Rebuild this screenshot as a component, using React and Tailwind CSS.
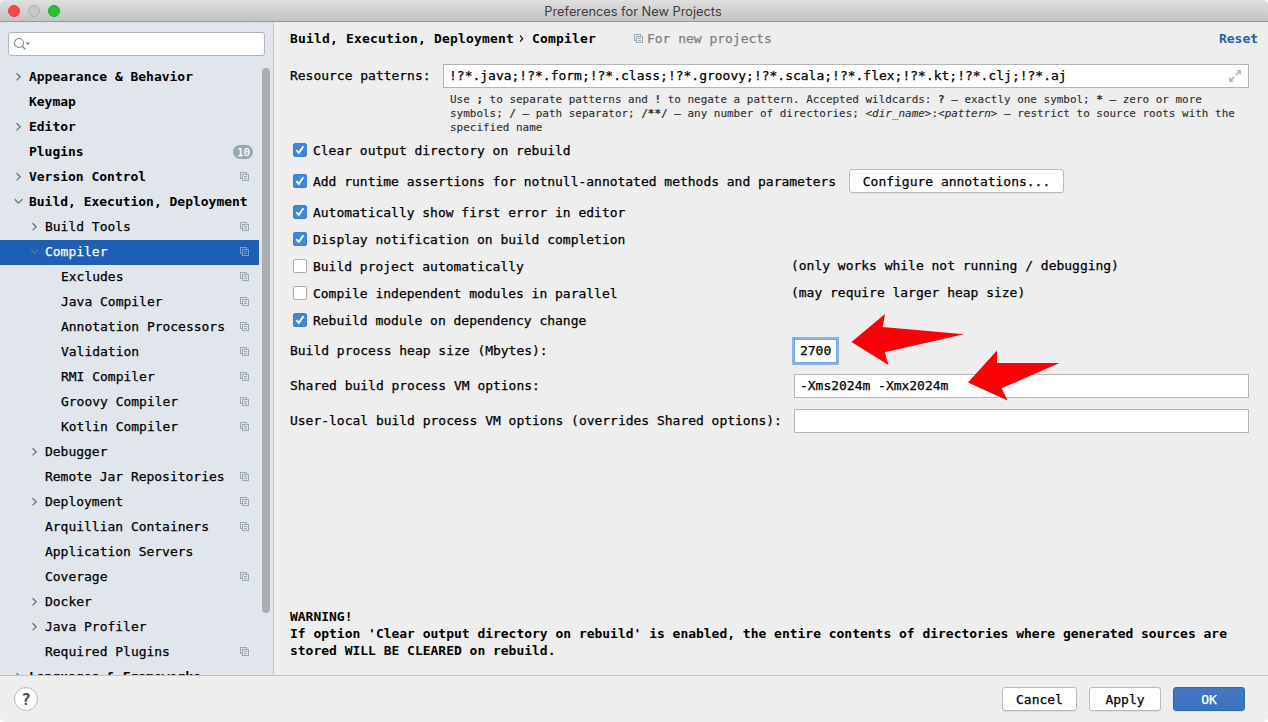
import React from "react";

const CopyIcon = ({ className = "text-[#9aa7b0]" }) => (
  <svg width="9" height="9" viewBox="0 0 9 9" fill="none" stroke="currentColor" shapeRendering="crispEdges" className={"shrink-0 " + className}>
    <path d="M2 6.5H.5V.5H6.5V2" />
    <path d="M2.5 2.5H8.5V8.5H2.5Z" />
    <path d="M4 4.5H7M4 6.5H7" />
  </svg>
);

const Arrow = ({ open, className }) => (
  <svg width="10" height="10" viewBox="0 0 10 10" fill="none" stroke="currentColor" strokeWidth="1.3" className={className}>
    {open ? <path d="M1.6 2.3L5.5 6.2L9.4 2.3" /> : <path d="M3.5 1.2L7.2 4.8L3.5 8.4" />}
  </svg>
);

const items = [
  { t: "Appearance & Behavior", d: 0, a: "closed" },
  { t: "Keymap", d: 0 },
  { t: "Editor", d: 0, a: "closed" },
  { t: "Plugins", d: 0, badge: "10" },
  { t: "Version Control", d: 0, a: "closed", c: true },
  { t: "Build, Execution, Deployment", d: 0, a: "open" },
  { t: "Build Tools", d: 1, a: "closed", c: true },
  { t: "Compiler", d: 1, a: "open", c: true, sel: true },
  { t: "Excludes", d: 2, c: true },
  { t: "Java Compiler", d: 2, c: true },
  { t: "Annotation Processors", d: 2, c: true },
  { t: "Validation", d: 2, c: true },
  { t: "RMI Compiler", d: 2, c: true },
  { t: "Groovy Compiler", d: 2, c: true },
  { t: "Kotlin Compiler", d: 2, c: true },
  { t: "Debugger", d: 1, a: "closed" },
  { t: "Remote Jar Repositories", d: 1, c: true },
  { t: "Deployment", d: 1, a: "closed", c: true },
  { t: "Arquillian Containers", d: 1, c: true },
  { t: "Application Servers", d: 1 },
  { t: "Coverage", d: 1, c: true },
  { t: "Docker", d: 1, a: "closed" },
  { t: "Java Profiler", d: 1, a: "closed" },
  { t: "Required Plugins", d: 1, c: true },
  { t: "Languages & Frameworks", d: 0, a: "closed" },
];

const indents = ["pl-[13px]", "pl-[29px]", "pl-[45px]"];

function TreeRow({ item }) {
  return (
    <div className={`flex h-[25px] w-[259px] shrink-0 items-start ${indents[item.d]} ${item.sel ? "bg-[#1e5fb3] text-white" : ""}`}>
      <div className="w-4 shrink-0 pt-[7px]">
        {item.a && <Arrow open={item.a === "open"} className={item.sel ? "text-[#5f6f84]" : "text-[#6e7277]"} />}
      </div>
      <span className={`flex-1 pt-[3px] ${item.d === 0 ? "font-bold [-webkit-text-stroke:0px]" : ""}`}>{item.t}</span>
      {item.badge && (
        <span className="mt-[5px] mr-[6px] flex h-[14px] w-5 shrink-0 items-center justify-center rounded-full bg-[#9aa7b0] pt-px pl-px text-[11px] text-white">{item.badge}</span>
      )}
      {item.c && <CopyIcon className={item.sel ? "mt-[7px] mr-[10px] text-[#7f9cc4]" : "mt-[7px] mr-[10px] text-[#9aa7b0]"} />}
    </div>
  );
}

function Check({ on, label, gap, children }) {
  return (
    <div className={`flex h-[26px] items-center ${gap}`}>
      <span className={`ml-[3px] flex h-[14px] w-[14px] shrink-0 items-center justify-center rounded-[2px] border ${on ? "border-[#3b80cf] bg-[#3f87da]" : "border-[#acacac] bg-white"}`}>
        {on && (
          <svg width="12" height="12" viewBox="0 0 12 12" fill="none" stroke="white" strokeWidth="1.9">
            <path d="M2.3 6.2L4.8 8.9L9.4 2.2" />
          </svg>
        )}
      </span>
      <span className="w-[479px] pl-[6px] pt-px">{label}</span>
      {children}
    </div>
  );
}

const Button = ({ className, children }) => (
  <button className={`flex h-6 shrink-0 items-center justify-center rounded-[3px] border pt-px shadow-[0_1px_0_rgba(0,0,0,0.06)] ${className}`}>{children}</button>
);

export default function App() {
  return (
    <div className="flex h-[722px] w-[1268px] flex-col overflow-hidden bg-white whitespace-nowrap font-['DejaVu_Sans_Mono',monospace] text-[12.97px] leading-[17px] text-black [-webkit-text-stroke:0.25px]">
      <div className="flex h-[22px] shrink-0 items-center rounded-t-[5px] border-b border-[#979797] bg-linear-to-b from-[#e0e0e0] to-[#c3c3c3]">
        <div className="flex w-[273px] gap-2 pl-2">
          <span className="h-3 w-3 rounded-full border border-[#df3d3a] bg-[#fc4946]" />
          <span className="h-3 w-3 rounded-full border border-[#aeaeae] bg-[#c7c7c7]" />
          <span className="h-3 w-3 rounded-full border border-[#1fa628] bg-[#28c131]" />
        </div>
        <span className="flex-1 pr-[275px] pt-[2px] text-center font-['Inter',sans-serif] text-[12.8px] text-[#3c3c3c] [-webkit-text-stroke:0px]">Preferences for New Projects</span>
      </div>

      <div className="flex h-[653px] shrink-0">
        <div className="flex w-[274px] shrink-0 flex-col overflow-hidden border-r border-[#c3c5c9] bg-[#e1e6ed]">
          <div className="mt-[10px] ml-2 flex h-6 w-[257px] shrink-0 items-center rounded-[3px] border border-[#b5b5b5] bg-white pl-[5px]">
            <svg width="17" height="14" viewBox="0 0 17 14" fill="none" stroke="#7f8b91">
              <circle cx="5" cy="6" r="4.5" strokeWidth="1.1" />
              <path d="M8.2 9.2L11.3 12.2" strokeWidth="1.5" />
              <path d="M11.5 5.5H16.2L13.85 8Z" fill="#7f8b91" stroke="none" />
            </svg>
          </div>
          <div className="mt-[9px] flex min-h-0 flex-1">
            <div className="flex h-full w-[262px] flex-col overflow-hidden">
              {items.map((i) => <TreeRow key={i.t} item={i} />)}
            </div>
            <div className="mt-[3px] h-[545px] w-2 rounded-full bg-[#a9adb2]" />
          </div>
        </div>

        <div className="flex flex-1 flex-col bg-[#eeeeee] pl-4">
          <div className="flex h-[33px] shrink-0 items-center pr-[10px]">
            <span className="font-bold tracking-[0.19px] [-webkit-text-stroke:0px]">Build, Execution, Deployment</span>
            <svg width="18" height="10" viewBox="0 0 18 10" fill="none" stroke="black" strokeWidth="1.2" className="shrink-0"><path d="M6.2 1.5L8.6 4.6L6.2 7.7" /></svg>
            <span className="font-bold tracking-[0.19px] [-webkit-text-stroke:0px]">Compiler</span>
            <CopyIcon className="ml-[38px] text-[#9aa7b0]" />
            <span className="flex-1 pl-1 text-[#808080]">For new projects</span>
            <span className="font-bold text-[#1e5fae] [-webkit-text-stroke:0px]">Reset</span>
          </div>

          <div className="mt-[9px] flex h-6 shrink-0 items-center">
            <span className="w-[153px] pb-px">Resource patterns:</span>
            <div className="flex h-6 w-[806px] items-center justify-between border border-[#b5b5b5] bg-white pr-[7px] pl-[5px]">
              <span className="pb-px tracking-[0.01px]">!?*.java;!?*.form;!?*.class;!?*.groovy;!?*.scala;!?*.flex;!?*.kt;!?*.clj;!?*.aj</span>
              <svg width="12" height="12" viewBox="0 0 12 12" fill="#b4bac0">
                <path d="M7 0H12V5L10.2 3.2L7.7 5.7L6.3 4.3L8.8 1.8ZM0 7L1.8 8.8L4.3 6.3L5.7 7.7L3.2 10.2L5 12H0Z" />
              </svg>
            </div>
          </div>

          <div className="mt-[5px] ml-[160px] h-[42px] shrink-0 text-[10.96px] leading-[14px] text-[#2b2b2b] [-webkit-text-stroke:0.1px]">
            Use <b>;</b> to separate patterns and <b>!</b> to negate a pattern. Accepted wildcards: <b>?</b> — exactly one symbol; <b>*</b> — zero or more<br />
            symbols; <b>/</b> — path separator; <b>/**/</b> — any number of directories; <i>&lt;dir_name&gt;</i>:<i>&lt;pattern&gt;</i> — restrict to source roots with the<br />
            specified name
          </div>

          <Check on label="Clear output directory on rebuild" gap="mt-[2px]" />
          <div className="mt-[5px] flex h-[26px] items-center">
            <Check on label="Add runtime assertions for notnull-annotated methods and parameters" gap="w-[559px]" />
            <Button className="w-[215px] border-[#b9b9b9] bg-white">Configure annotations...</Button>
          </div>
          <Check on label="Automatically show first error in editor" gap="mt-[5px]" />
          <Check on label="Display notification on build completion" gap="mt-px" />
          <Check label="Build project automatically" gap="mt-px"><span className="pb-px pl-[5px]">(only works while not running / debugging)</span></Check>
          <Check label="Compile independent modules in parallel" gap="mt-px"><span className="pb-px pl-[5px]">(may require larger heap size)</span></Check>
          <Check on label="Rebuild module on dependency change" gap="mt-px" />

          <div className="mt-[6px] flex h-6 shrink-0 items-center">
            <span className="w-[504px] pb-px">Build process heap size (Mbytes):</span>
            <div className="flex h-6 w-[43px] items-center border border-[#7aa3d6] bg-white pb-px pl-[5px] shadow-[0_0_0_2px_#87b2eb]">2700</div>
            <div className="relative h-6 w-0">
              <svg className="absolute -top-[27px] left-[8px]" width="230" height="92" viewBox="845 312 230 92" fill="#fc0007">
                <path d="M851.5 342L885 314L882.7 327L964 334.3L884.7 352.3L888.5 365Z" />
                <path d="M968 382.5L997 350.5V363H1059.5L1001.7 388.3L1007.5 400.5Z" />
              </svg>
            </div>
          </div>
          <div className="mt-[11px] flex h-6 shrink-0 items-center">
            <span className="w-[504px] pb-px">Shared build process VM options:</span>
            <div className="flex h-6 w-[455px] items-center border border-[#b5b5b5] bg-white pb-px pl-[5px]">-Xms2024m -Xmx2024m</div>
          </div>
          <div className="mt-[11px] flex h-6 shrink-0 items-center">
            <span className="w-[504px] pb-px">User-local build process VM options (overrides Shared options):</span>
            <div className="h-6 w-[455px] border border-[#b5b5b5] bg-white" />
          </div>

          <div className="mt-auto mb-4 font-bold [-webkit-text-stroke:0px]">
            WARNING!<br />
            If option 'Clear output directory on rebuild' is enabled, the entire contents of directories where generated sources are<br />
            stored WILL BE CLEARED on rebuild.
          </div>
        </div>
      </div>

      <div className="flex h-[47px] shrink-0 items-center rounded-b-[5px] border-t border-[#c4c4c4] bg-[#eeeeee] pr-[23px] pl-[14px]">
        <div className="flex h-6 w-6 items-center justify-center rounded-full border border-[#b9b9b9] bg-white text-[16px] font-bold text-[#4d4d4d] [-webkit-text-stroke:0px]">?</div>
        <div className="ml-auto flex gap-3">
          <Button className="w-[75px] border-[#b9b9b9] bg-white">Cancel</Button>
          <Button className="w-[72px] border-[#b9b9b9] bg-white">Apply</Button>
          <Button className="w-[72px] border-[#2f65ae] bg-linear-to-b from-[#4579c1] to-[#3873c2] text-white">OK</Button>
        </div>
      </div>
    </div>
  );
}
